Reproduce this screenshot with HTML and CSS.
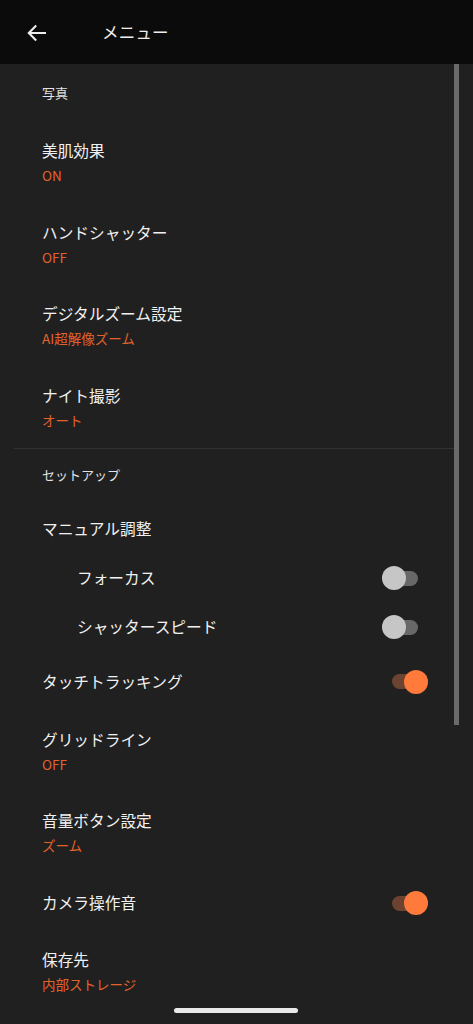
FILE: index.html
```html
<!DOCTYPE html>
<html lang="ja">

<head>
    <meta charset="UTF-8">
    <title>メニュー</title>
    <link rel="stylesheet" href="styles.css">
</head>

<body>
    <div class="screen">
        <header class="top-bar">
            <svg class="back" width="20" height="18" viewBox="0 0 20 18">
                <path d="M19 9H1.8M9.2 1.6L1.8 9l7.4 7.4" fill="none" stroke="#ededed" stroke-width="2.1" />
            </svg>
            <span class="top-title">メニュー</span>
        </header>

        <div class="menu">
            <div class="section first">写真</div>

            <div class="item">
                <div class="item-title">美肌効果</div>
                <div class="item-value">ON</div>
            </div>
            <div class="item">
                <div class="item-title">ハンドシャッター</div>
                <div class="item-value">OFF</div>
            </div>
            <div class="item">
                <div class="item-title">デジタルズーム設定</div>
                <div class="item-value">AI超解像ズーム</div>
            </div>
            <div class="item">
                <div class="item-title">ナイト撮影</div>
                <div class="item-value">オート</div>
            </div>

            <div class="divider"></div>

            <div class="section after-divider">セットアップ</div>

            <div class="group-title">マニュアル調整</div>
            <div class="row sub">
                <span>フォーカス</span>
                <span class="toggle"><span class="track"></span><span class="knob"></span></span>
            </div>
            <div class="row sub">
                <span>シャッタースピード</span>
                <span class="toggle"><span class="track"></span><span class="knob"></span></span>
            </div>
            <div class="row touch">
                <span>タッチトラッキング</span>
                <span class="toggle on"><span class="track"></span><span class="knob"></span></span>
            </div>

            <div class="item">
                <div class="item-title">グリッドライン</div>
                <div class="item-value">OFF</div>
            </div>
            <div class="item">
                <div class="item-title">音量ボタン設定</div>
                <div class="item-value">ズーム</div>
            </div>
            <div class="row sound">
                <span>カメラ操作音</span>
                <span class="toggle on"><span class="track"></span><span class="knob"></span></span>
            </div>
            <div class="item">
                <div class="item-title">保存先</div>
                <div class="item-value">内部ストレージ</div>
            </div>
        </div>

        <div class="scrollbar"></div>
        <div class="home-bar"></div>
    </div>
</body>

</html>
```

FILE: styles.css
```css
* {
    box-sizing: border-box;
}

html,
body {
    margin: 0;
    padding: 0;
    background-color: #202020;
}

body {
    font-family: "Noto Sans CJK JP", "Noto Sans", sans-serif;
    color: #f1f1f1;
}

.screen {
    position: relative;
    width: 473px;
    height: 1024px;
    overflow: hidden;
    background-color: #202020;
}

.top-bar {
    height: 64px;
    background-color: #0b0b0b;
    display: flex;
    align-items: center;
    padding-left: 27px;
}

.back {
    display: block;
    margin-top: 1px;
}

.top-title {
    margin-left: 55px;
    font-size: 16.5px;
    color: #eeeeee;
    letter-spacing: 0.2px;
}

.menu {
    padding-left: 42px;
}

.section {
    font-size: 13px;
    line-height: 24px;
    color: #e4e4e4;
    padding-bottom: 18px;
}

.section.first {
    padding-top: 17px;
}

.section.after-divider {
    padding-top: 13.5px;
}

.item {
    height: 81.5px;
    padding-top: 16px;
}

.item-title,
.group-title,
.row {
    font-size: 15.7px;
    line-height: 24px;
    color: #f1f1f1;
}

.item-value {
    font-size: 13.5px;
    line-height: 24px;
    color: #e3622c;
}

.divider {
    height: 1px;
    margin-top: -1px;
    margin-left: -28px;
    margin-right: 15px;
    background-color: #313131;
}

.group-title {
    height: 49px;
    display: flex;
    align-items: center;
}

.row {
    display: flex;
    align-items: center;
    justify-content: space-between;
    padding-right: 45px;
}

.row.sub {
    height: 49px;
    padding-left: 35px;
    padding-right: 55px;
}

.row.touch {
    height: 60px;
}

.row.sound {
    height: 57px;
}

.toggle {
    position: relative;
    width: 36px;
    height: 24px;
    flex-shrink: 0;
}

.toggle .track {
    position: absolute;
    left: 0;
    right: 0;
    top: 4.5px;
    height: 15px;
    border-radius: 8px;
    background-color: #686868;
}

.toggle .knob {
    position: absolute;
    top: 0;
    left: 0;
    width: 24px;
    height: 24px;
    border-radius: 50%;
    background-color: #c6c6c6;
}

.toggle.on .track {
    background-color: #6c4231;
}

.toggle.on .knob {
    left: auto;
    right: 0;
    background-color: #ff7a3b;
}

.scrollbar {
    position: absolute;
    left: 454px;
    top: 64px;
    width: 5px;
    height: 661px;
    background-color: #6a6a6a;
}

.home-bar {
    position: absolute;
    left: 174px;
    top: 1008px;
    width: 124px;
    height: 5px;
    border-radius: 3px;
    background-color: #e9e9e9;
}
```
